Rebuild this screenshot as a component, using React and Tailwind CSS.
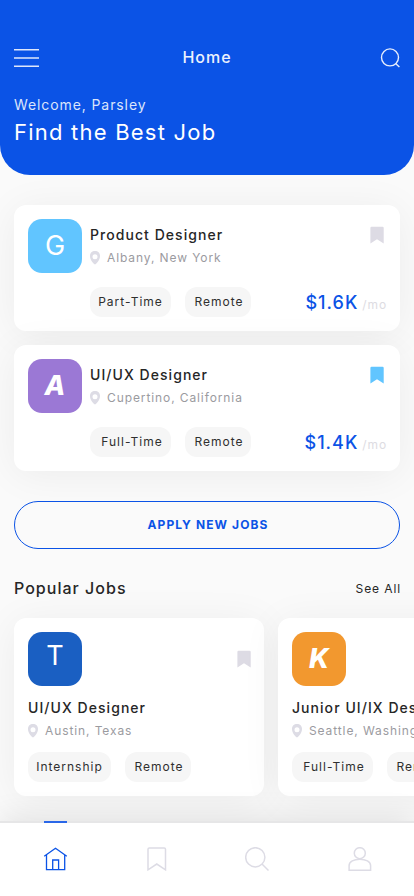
import React from "react";

function Pin() {
  return (
    <svg width="10" height="14" viewBox="0 0 10 14" className="shrink-0">
      <path
        fillRule="evenodd"
        fill="#dddce5"
        d="M5 0C2 0 0 2 0 4.900C0 8.800 3 12 5 13.600C7 12 10 8.800 10 4.900C10 2 8 0 5 0ZM5 3.200A2.500 2.500 0 1 1 5 8.200A2.500 2.500 0 1 1 5 3.200Z"
      />
    </svg>
  );
}

function Bookmark({ active }) {
  return (
    <svg width="14" height="18" viewBox="0 0 14 18" className="shrink-0">
      <path
        fill={active ? "#61c5ff" : "#dddbe4"}
        d="M1.500 0.800H12.500Q13.700 0.800 13.700 2V17.500L7 13.300L0.400 17.500V2Q0.400 0.800 1.500 0.800Z"
      />
    </svg>
  );
}

function Logo({ letter, bg, slanted, className = "" }) {
  return (
    <div className={`flex size-[54px] shrink-0 items-center justify-center rounded-[14px] text-white ${bg}`}>
      <span
        className={
          slanted
            ? `text-[27px] leading-[54px] font-extrabold italic ${className}`
            : `text-[27px] leading-[54px] font-normal ${className}`
        }
      >
        {letter}
      </span>
    </div>
  );
}

function Tag({ children, width }) {
  return (
    <span
      className={`flex h-[30px] items-center justify-center rounded-[12px] bg-[#f6f6f6] text-[12px] tracking-[1px] whitespace-nowrap text-[#2f2f2f] ${width}`}
    >
      {children}
    </span>
  );
}

function Location({ children }) {
  return (
    <div className="flex h-5 items-center gap-[7px] text-[12px] tracking-[0.9px] whitespace-nowrap text-[#9b9b9f]">
      <Pin />
      <span>{children}</span>
    </div>
  );
}

function JobCard({ logo, title, place, type, typePad = "", pay, active }) {
  return (
    <article className="h-[126px] rounded-[12px] bg-white p-[14px] shadow-[0_4px_40px_rgba(0,0,0,0.06)]">
      <div className="flex h-[54px] gap-2">
        {logo}
        <div className="flex flex-1 flex-col pt-[6px]">
          <h2 className="h-[23px] text-[14px] leading-5 font-medium tracking-[1.05px] text-[#262626]">{title}</h2>
          <Location>{place}</Location>
        </div>
        <div className="pt-[7px] pr-[2px]">
          <Bookmark active={active} />
        </div>
      </div>
      <div className="mt-[14px] flex items-center pl-[62px]">
        <Tag width={`w-[81px] ${typePad}`}>{type}</Tag>
        <span className="w-[14px]" />
        <Tag width="w-[66px] pl-[2px]">Remote</Tag>
        <div className="-mr-px ml-auto flex items-baseline pt-px whitespace-nowrap">
          <span className="text-[18px] font-medium tracking-[1px] text-[#0b53e6]">{pay}</span>
          <span className="ml-[4px] text-[12px] tracking-[0.9px] text-[#dddce2]">/mo</span>
        </div>
      </div>
    </article>
  );
}

function PopularCard({ logo, title, place, type, typeWidth }) {
  return (
    <article className="h-[178px] w-[250px] shrink-0 rounded-[12px] bg-white p-[14px] shadow-[0_4px_40px_rgba(0,0,0,0.06)]">
      <div className="flex items-center justify-between">
        {logo}
        <div className="-mr-[1px]">
          <Bookmark />
        </div>
      </div>
      <h3 className="mt-[12px] h-[23px] text-[14px] leading-5 font-medium tracking-[1.05px] whitespace-nowrap text-[#262626]">
        {title}
      </h3>
      <Location>{place}</Location>
      <div className="mt-[11px] flex gap-[14px]">
        <Tag width={typeWidth}>{type}</Tag>
        <Tag width="w-[66px] pl-[2px]">Remote</Tag>
      </div>
    </article>
  );
}

export default function App() {
  return (
    <div className="flex h-[896px] w-[414px] flex-col overflow-hidden bg-[#fafafa] font-['Inter',sans-serif]">
      <header className="relative h-[175px] shrink-0 rounded-b-[30px] bg-[#0b53e6] px-[14px] pt-[46px] text-white">
        <div className="flex h-6 items-center justify-between">
          <svg width="25" height="20" viewBox="0 0 25 20" fill="none" stroke="#dfe7fb" strokeWidth="1.500">
            <path d="M0 1.700H25M0 10H25M0 18.200H25" />
          </svg>
          <h1 className="pr-[5px] pb-[2px] text-[16px] leading-[22px] font-medium tracking-[1px] text-[#edf2fd]">Home</h1>
          <svg width="20" height="20" viewBox="0 0 20 20" fill="none" stroke="#e6edfc" strokeWidth="1.400">
            <circle cx="10" cy="9.400" r="8.500" />
            <path d="M15.600 15.400L19.400 19" />
          </svg>
        </div>
        <p className="mt-[25px] text-[14px] leading-5 tracking-[0.9px] text-[#dbe5fb]">Welcome, Parsley</p>
        <p className="mt-[2px] text-[22px] leading-[30px] font-normal tracking-[1.22px]">Find the Best Job</p>
      </header>

      <main className="flex h-[646px] shrink-0 flex-col overflow-hidden px-[14px] pt-[30px]">
        <section className="flex flex-col gap-[14px]">
          <JobCard
            logo={<Logo letter="G" bg="bg-[#61c5ff]" />}
            title="Product Designer"
            place="Albany, New York"
            type="Part-Time"
            pay="$1.6K"
          />
          <JobCard
            logo={<Logo letter="A" bg="bg-[#9b78d5]" slanted />}
            title="UI/UX Designer"
            place="Cupertino, California"
            type="Full-Time"
            typePad="pl-[3px]"
            pay="$1.4K"
            active
          />
        </section>

        <button className="mt-[30px] h-12 shrink-0 rounded-full border border-[#0b53e6] bg-[#fafafa] pl-[2px] text-[12px] font-bold tracking-[1.1px] text-[#0b53e6]">
          APPLY NEW JOBS
        </button>

        <div className="mt-[28px] flex h-6 shrink-0 items-center justify-between text-[#262626]">
          <h2 className="pb-[2px] text-[16px] leading-[22px] font-medium tracking-[1.02px]">Popular Jobs</h2>
          <span className="-mr-px text-[12px] tracking-[0.9px]">See All</span>
        </div>

        <section className="mt-[17px] flex gap-[14px]">
          <PopularCard
            logo={<Logo letter="T" bg="bg-[#1a5fc2]" className="-mt-[6px]" />}
            title="UI/UX Designer"
            place="Austin, Texas"
            type="Internship"
            typeWidth="w-[83px]"
          />
          <PopularCard
            logo={<Logo letter="K" bg="bg-[#f2982f]" slanted />}
            title="Junior UI/IX Designer"
            place="Seattle, Washington"
            type="Full-Time"
            typeWidth="w-[81px] pl-[3px]"
          />
        </section>
      </main>

      <nav className="relative flex h-[75px] shrink-0 border-t-2 border-[#e6e6e7] bg-white shadow-[0_-3px_30px_rgba(0,0,0,0.1)]">
        <span className="absolute -top-[2px] left-[44px] h-[2px] w-[23px] bg-[#2a67e8]" />
        <div className="flex h-[72px] w-full items-center justify-between pr-[42px] pl-[43px]">
          <svg width="25" height="24" viewBox="0 0 25 24" fill="none" stroke="#0b53e6" strokeWidth="1.300">
            <path d="M1.200 9.300L12.500 1.300L23.800 9.300M3.500 8V22.600H21.700V8M9.700 22.600V13H15.600V22.600" />
          </svg>
          <svg width="20" height="24" viewBox="0 0 20 24" fill="none" stroke="#dddce5" strokeWidth="1.500">
            <path d="M1 22.800V2.200Q1 0.900 2.300 0.900H17.200Q18.500 0.900 18.500 2.200V22.800L9.750 17Z" />
          </svg>
          <svg width="24" height="24" viewBox="0 0 24 24" fill="none" stroke="#dddce5" strokeWidth="1.500">
            <circle cx="10.300" cy="10.300" r="9.600" />
            <path d="M17 17L23.500 23.500" />
          </svg>
          <svg width="24" height="24" viewBox="0 0 24 24" fill="none" stroke="#dddce5" strokeWidth="1.500">
            <circle cx="11.800" cy="6.200" r="5.500" />
            <path d="M1.100 23.200V18.500C1.100 14.500 6 12.300 11.800 12.300S22.600 14.500 22.600 18.500V23.200Z" />
          </svg>
        </div>
      </nav>
    </div>
  );
}
